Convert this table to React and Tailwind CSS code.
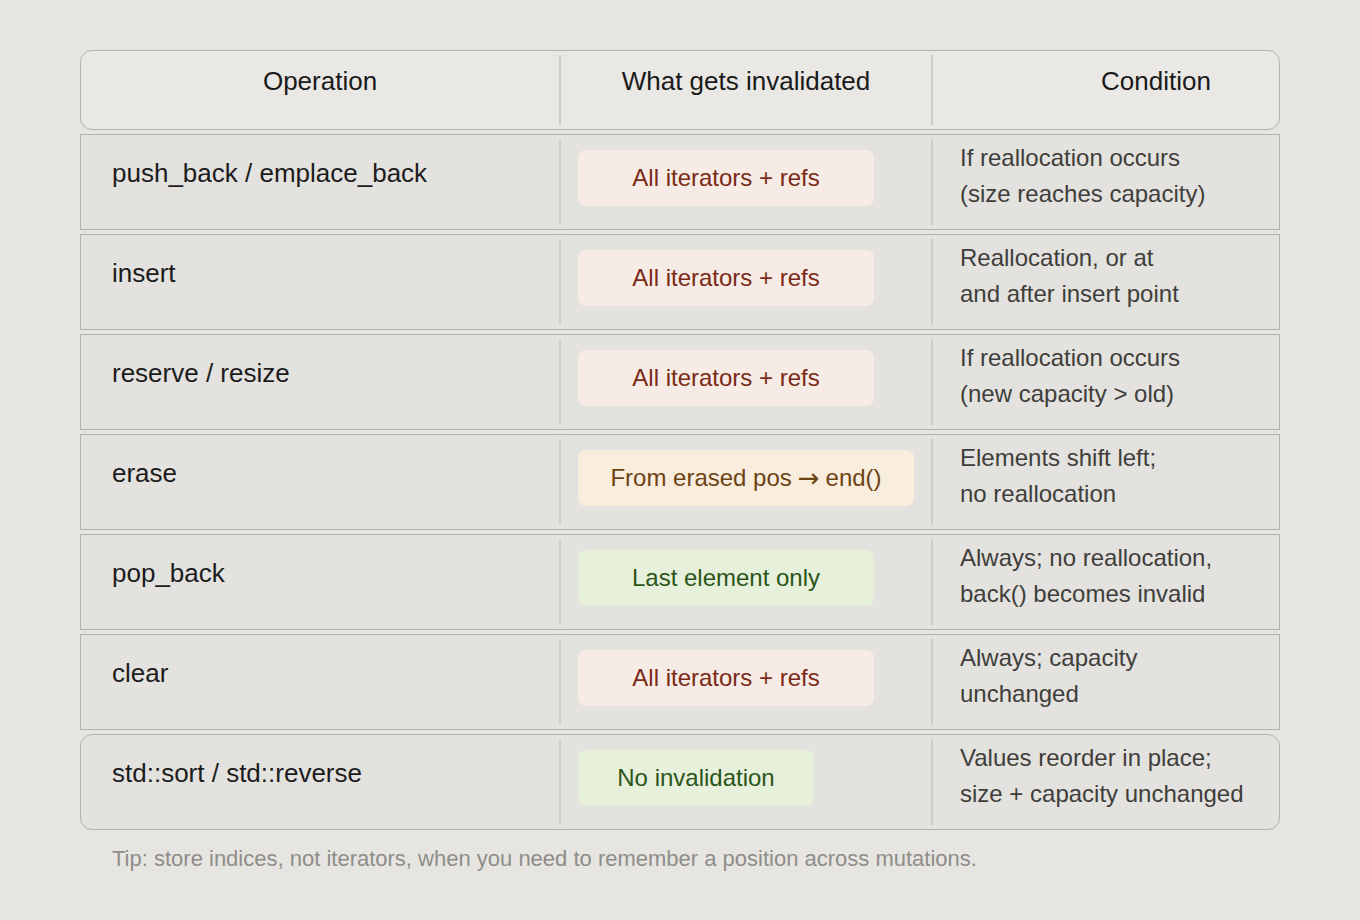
import React from "react";

const rows = [
  { op: "push_back / emplace_back", pill: "All iterators + refs", kind: "red", w: "w-[296px]", cond: ["If reallocation occurs", "(size reaches capacity)"] },
  { op: "insert", pill: "All iterators + refs", kind: "red", w: "w-[296px]", cond: ["Reallocation, or at", "and after insert point"] },
  { op: "reserve / resize", pill: "All iterators + refs", kind: "red", w: "w-[296px]", cond: ["If reallocation occurs", "(new capacity > old)"] },
  { op: "erase", pill: "arrow", kind: "orange", w: "w-[336px]", cond: ["Elements shift left;", "no reallocation"] },
  { op: "pop_back", pill: "Last element only", kind: "green", w: "w-[296px]", cond: ["Always; no reallocation,", "back() becomes invalid"] },
  { op: "clear", pill: "All iterators + refs", kind: "red", w: "w-[296px]", cond: ["Always; capacity", "unchanged"] },
  { op: "std::sort / std::reverse", pill: "No invalidation", kind: "green", w: "w-[236px]", cond: ["Values reorder in place;", "size + capacity unchanged"], last: true },
];

const pillCls = {
  red: "bg-[#f7ebe5] text-[#7a2a16]",
  orange: "bg-[#f9edde] text-[#6e4313]",
  green: "bg-[#e7f0db] text-[#2b5518]",
};

export default function App() {
  return (
    <div className="min-h-[920px] w-full bg-[#e6e5e1] pt-[50px] font-['Liberation_Sans',Arial,sans-serif]">
      <div className="mx-[80px] flex w-[1200px] flex-col gap-[4px]">
        <div className="grid h-[80px] grid-cols-[478px_372px_1fr] rounded-[12px] border border-[#b3b1ad] bg-[#e9e8e4] text-[26px] text-[#1a1a1a]">
          <div className="pt-[15px] text-center leading-[30px]">Operation</div>
          <div className="my-[4px] border-l-2 border-[#cfcdc9] pt-[11px] text-center leading-[30px]">What gets invalidated</div>
          <div className="my-[4px] border-l-2 border-[#cfcdc9] pl-[168px] pt-[11px] leading-[30px]">Condition</div>
        </div>
        {rows.map((r, i) => (
          <div
            key={i}
            className={
              "grid h-[96px] grid-cols-[478px_372px_1fr] border border-[#b3b1ad] bg-[#e3e2de] " +
              (r.last ? "rounded-[12px]" : "")
            }
          >
            <div className="pl-[31px] pt-[23px] text-[26px] leading-[30px] text-[#1c1c1c]">{r.op}</div>
            <div className="my-[4px] border-l-2 border-[#cfcdc9] pl-[17px] pt-[11px]">
              <div className={"flex h-[56px] items-center justify-center rounded-[8px] text-[24px] " + r.w + " " + pillCls[r.kind]}>
                {r.pill === "arrow" ? (
                  <span className="flex items-center">
                    <span>From erased pos</span>
                    <span className="mx-[6px] font-['DejaVu_Sans',sans-serif] text-[26px] leading-none">{"\u2192"}</span>
                    <span>end()</span>
                  </span>
                ) : (
                  r.pill
                )}
              </div>
            </div>
            <div className="my-[4px] border-l-2 border-[#cfcdc9] pl-[27px] pt-[1px] text-[24px] leading-[36px] text-[#3f3e3b]">
              <div>{r.cond[0]}</div>
              <div>{r.cond[1]}</div>
            </div>
          </div>
        ))}
      </div>
      <div className="ml-[112px] mt-[16px] text-[22px] leading-[26px] text-[#8f8d89]">
        Tip: store indices, not iterators, when you need to remember a position across mutations.
      </div>
    </div>
  );
}
